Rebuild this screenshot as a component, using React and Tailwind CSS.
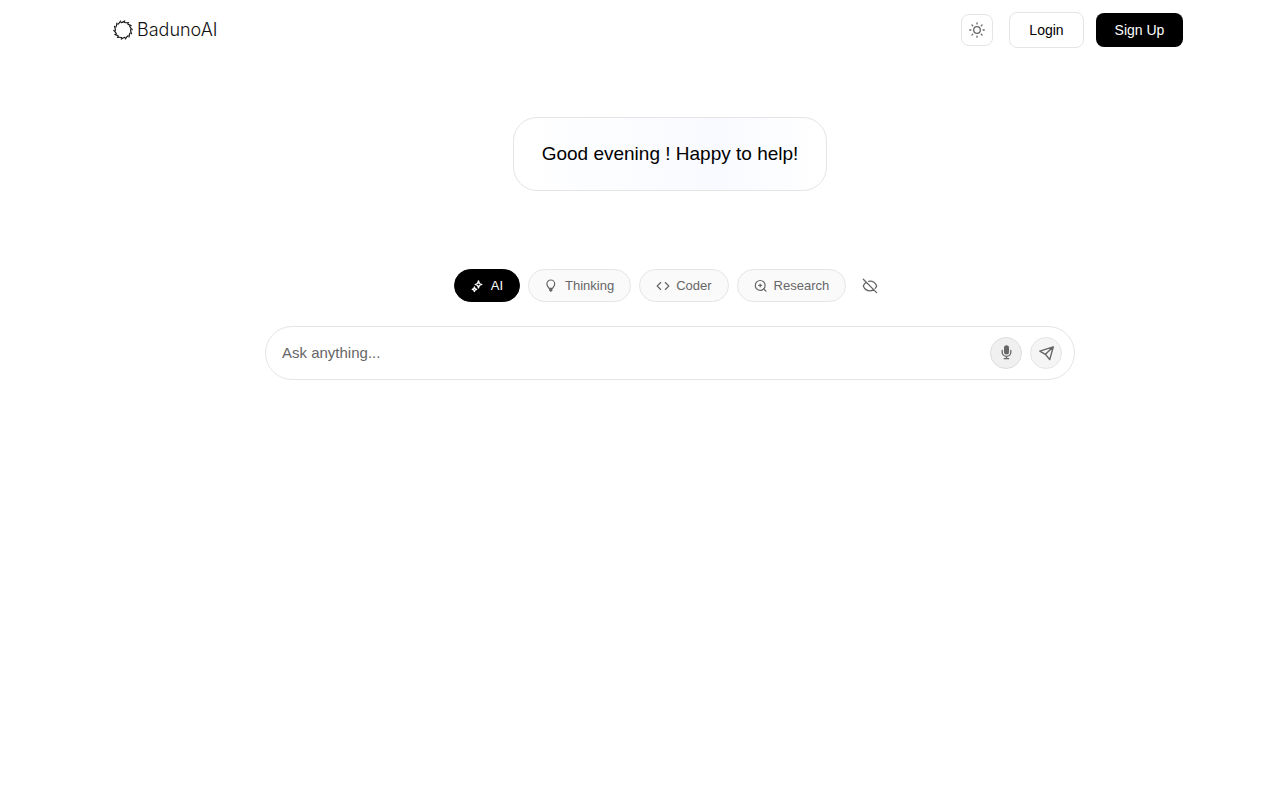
import { Code } from "lucide-react";

function Logo() {
  const blades = Array.from({ length: 14 }, (_, i) => (i * 360) / 14);
  return (
    <svg className="size-5" viewBox="0 0 20 20" fill="none" stroke="#111" strokeLinecap="round" strokeLinejoin="round" aria-hidden="true">
      {blades.map((angle) => (
        <path key={angle} strokeWidth="1.2" d="M8 2.600 Q10 2.200 11.700 .9" transform={`rotate(${angle} 10 10)`} />
      ))}
    </svg>
  );
}

function Sun() {
  const rays = [0, 45, 90, 135, 180, 225, 270, 315];
  return (
    <svg className="size-4" viewBox="0 0 16 16" fill="none" stroke="currentColor" strokeWidth="1.300" strokeLinecap="round" aria-hidden="true">
      <circle cx="8" cy="8" r="3.300" />
      {rays.map((angle) => (
        <path key={angle} d="M8 .8V1.900" transform={`rotate(${angle} 8 8)`} />
      ))}
    </svg>
  );
}

function Stars() {
  return (
    <svg className="size-3.5" viewBox="0 0 14 14" fill="none" stroke="currentColor" strokeWidth="1.300" strokeLinejoin="round" aria-hidden="true">
      <path d="M7.500 1.800 8.300 4.500 10.800 5.500 8.300 6.500 7.500 9 6.600 6.500 4.200 5.500 6.600 4.500Z" />
      <path d="M3.400 7.900 4 9.600 5.700 10.300 4 11 3.400 12.500 2.800 11 1.200 10.300 2.800 9.600Z" />
    </svg>
  );
}

function Bulb() {
  return (
    <svg className="size-3.5" viewBox="0 0 14 14" fill="none" stroke="currentColor" strokeWidth="1.200" strokeLinejoin="round" aria-hidden="true">
      <path d="M4 9.300C3.600 8.100 1.900 7.200 1.900 4.900a3.900 3.900 0 0 1 7.800 0c0 2.300-1.700 3.200-2.100 4.400Z" />
      <path d="M4.200 9.800h3.200v1.500l-1.600 2-1.600-2Z" fill="currentColor" stroke="none" />
    </svg>
  );
}

function Search() {
  return (
    <svg className="size-3.5" viewBox="0 0 14 14" fill="none" stroke="currentColor" strokeWidth="1.200" strokeLinecap="round" aria-hidden="true">
      <circle cx="6.200" cy="6.400" r="4.900" />
      <path d="m9.800 10 2.200 2.200M4.800 6.400h2.800M6.200 5v2.800" />
    </svg>
  );
}

function HiddenEye() {
  return (
    <svg className="size-4" viewBox="0 0 16 16" fill="none" stroke="currentColor" strokeWidth="1.300" strokeLinecap="round" strokeLinejoin="round" aria-hidden="true">
      <path d="M1.300 1.300 14.600 14.600M4.200 4.200C2.900 5.100 1.900 6.400 1.300 8 2.400 10.800 4.900 12.800 8 12.800c1.500 0 2.800-.4 3.900-1.200M6.700 3.400C7.100 3.300 7.600 3.200 8 3.200c3.100 0 5.500 2 6.700 4.800-.4 1-.9 1.700-1.500 2.400" />
    </svg>
  );
}

function Microphone() {
  return (
    <svg className="size-4" viewBox="0 0 16 16" fill="none" stroke="currentColor" strokeWidth="1.300" strokeLinecap="round" aria-hidden="true">
      <rect x="6" y=".2" width="5" height="9.300" rx="2.500" fill="currentColor" stroke="none" />
      <path d="M4.200 5.500v1.700c0 2.300 1.800 4.100 4.300 4.100s4.300-1.800 4.300-4.100V5.500M8.500 11.300v2.200M6.300 13.700h4.400" />
    </svg>
  );
}

function Plane() {
  return (
    <svg className="size-4" viewBox="0 0 16 16" fill="none" stroke="currentColor" strokeWidth="1.400" strokeLinejoin="round" aria-hidden="true">
      <path d="M15.300 1.800 1.800 6.100 7.400 9.300 11.700 14.600ZM7.400 9.300 15.300 1.800" />
    </svg>
  );
}

function Mode({ icon, label, active }) {
  return (
    <button
      type="button"
      aria-pressed={!!active}
      className={
        "flex items-center gap-1.5 rounded-full border px-4 py-1.5 text-[13px] leading-[19px] " +
        (active ? "border-black bg-black text-white" : "border-[#e5e5e5] bg-[#fafafa] text-[#666]")
      }
    >
      {icon}
      {label}
    </button>
  );
}

export default function App() {
  return (
    <div className="min-h-screen bg-white font-['Liberation_Sans',sans-serif] text-black">
      <header className="flex h-15 items-center justify-between pr-[97px] pl-[113px]">
        <a href="#" className="flex items-center gap-1 font-['Inter'] text-[18px] leading-6 font-light text-[#111]">
          <Logo />
          BadunoAI
        </a>
        <div className="flex items-center">
          <button type="button" aria-label="Switch theme" className="mr-4 flex size-8 items-center justify-center rounded-lg border border-[#e5e5e5] text-[#666]">
            <Sun />
          </button>
          <button type="button" className="mr-3 h-9 w-[75px] rounded-lg border border-[#e5e5e5] text-sm">Login</button>
          <button type="button" className="h-[34px] w-[87px] rounded-lg bg-black text-sm text-white">Sign Up</button>
        </div>
      </header>

      <main className="flex flex-col items-center pt-[57px] pl-15">
        <h1 className="rounded-3xl border border-[#e5e5e5] bg-linear-to-r from-white via-[#f8faff] via-65% to-white px-7 py-5 text-[19px] leading-8">
          Good evening ! Happy to help!
        </h1>

        <div className="mt-[78px] flex items-center gap-2">
          <Mode active icon={<Stars />} label="AI" />
          <Mode icon={<Bulb />} label="Thinking" />
          <Mode icon={<Code className="size-3.5" />} label="Coder" />
          <Mode icon={<Search />} label="Research" />
          <button type="button" aria-label="Private mode" className="flex size-8 items-center justify-center text-[#666]">
            <HiddenEye />
          </button>
        </div>

        <form className="mt-6 flex h-[54px] w-full max-w-[810px] items-center gap-2 rounded-[27px] border border-[#e5e5e5] pr-3 pl-4">
          <input
            aria-label="Message"
            placeholder="Ask anything..."
            className="min-w-0 flex-1 text-[15px] outline-none placeholder:text-[#666]"
          />
          <button type="button" aria-label="Voice input" className="flex size-8 items-center justify-center rounded-full border border-[#ddd] bg-[#f0f0f0] text-[#666]">
            <Microphone />
          </button>
          <button type="submit" aria-label="Send" className="flex size-8 items-center justify-center rounded-full border border-[#e5e5e5] bg-[#f5f5f5] text-[#666]">
            <Plane />
          </button>
        </form>
      </main>
    </div>
  );
}
